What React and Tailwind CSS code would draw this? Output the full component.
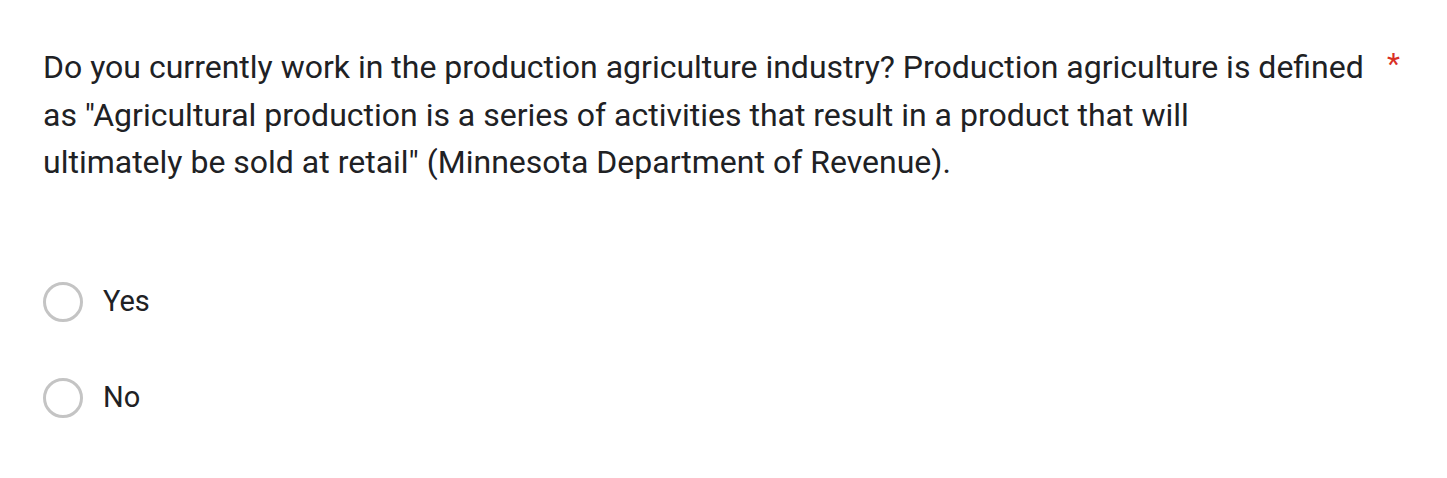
import React from 'react';

function Radio({ label }) {
  return (
    <label className="flex items-center h-[96px] cursor-pointer">
      <span className="w-[40px] h-[40px] rounded-full border-[3.5px] border-[#c4c4c4] shrink-0" />
      <span className="ml-[20px] text-[29px] text-[#202124]">{label}</span>
    </label>
  );
}

export default function App() {
  return (
    <div className="w-[1447px] h-[478px] bg-white pl-[43px] pt-[44px]" style={{ fontFamily: 'Roboto, "Liberation Sans", sans-serif' }}>
      <div className="flex">
        <div className="w-[1340px] text-[32px] leading-[47.5px] text-[#202124]">
          Do you currently work in the production agriculture industry? Production agriculture is defined as
          "Agricultural production is a series of activities that result in a product that will
          <br />
          ultimately be sold at retail" (Minnesota Department of Revenue).
        </div>
        <span className="ml-[4px] text-[30px] leading-[40px] text-[#d93025]">*</span>
      </div>
      <div className="mt-[67px]">
        <Radio label="Yes" />
        <Radio label="No" />
      </div>
    </div>
  );
}
